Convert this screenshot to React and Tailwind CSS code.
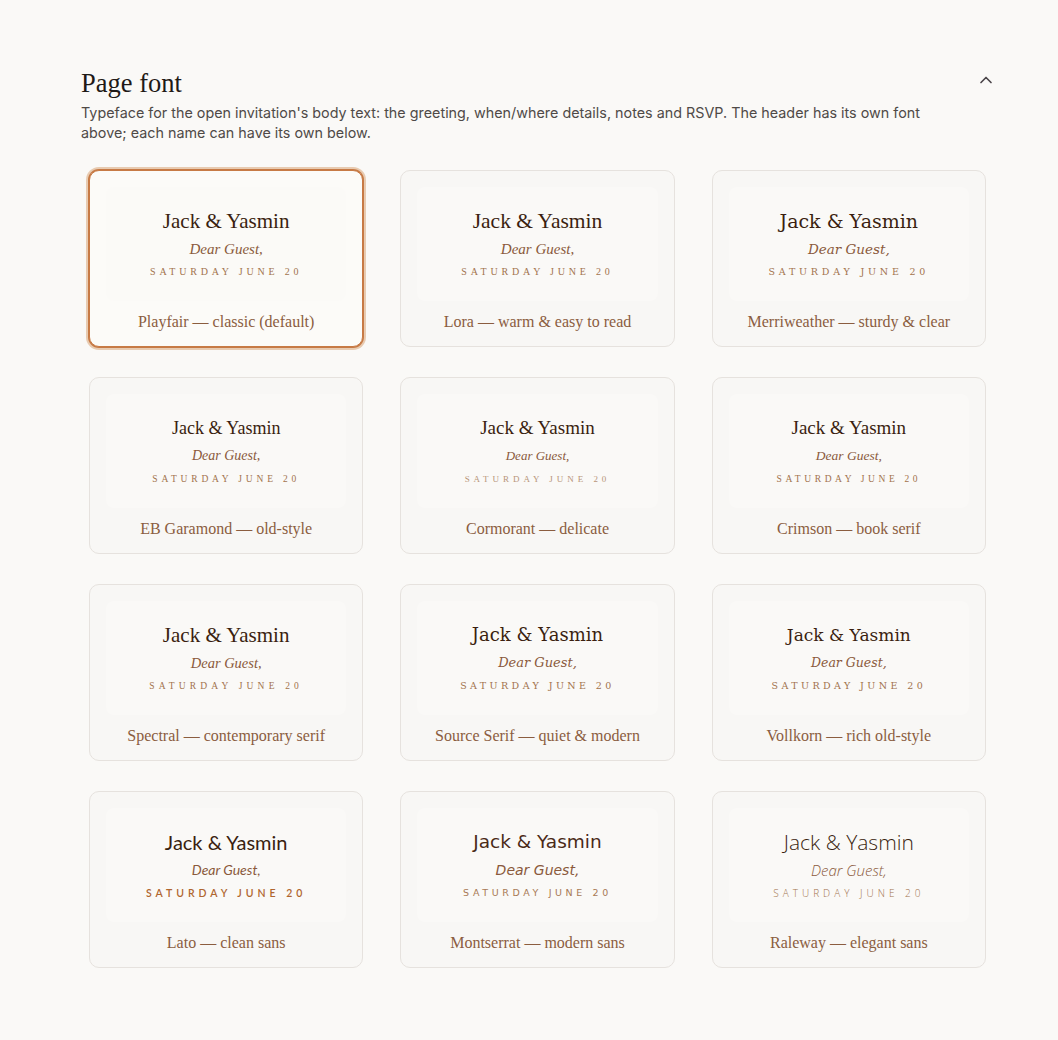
import React, { useState } from "react";
import { ChevronUp } from "lucide-react";

const SERIF = "font-['Liberation_Serif',serif]";
const DEJAVU = "font-['DejaVu_Serif',serif]";

const FONTS = [
  { id: "playfair", label: "Playfair — classic (default)", face: SERIF, name: "text-[21px]", guest: "text-[15px]", date: "text-[10px] tracking-[0.38em] text-[#a2734d]" },
  { id: "lora", label: "Lora — warm & easy to read", face: SERIF, name: "text-[21.5px]", guest: "text-[15px]", date: "text-[10px] tracking-[0.38em] text-[#a2734d]" },
  { id: "merriweather", label: "Merriweather — sturdy & clear", face: DEJAVU, name: "text-[19px]", guest: "text-[13.5px]", date: "text-[9.5px] tracking-[0.4em] text-[#a2734d]" },
  { id: "garamond", label: "EB Garamond — old-style", face: SERIF, name: "text-[18px]", guest: "text-[14px]", date: "text-[9.5px] tracking-[0.4em] text-[#a2734d]" },
  { id: "cormorant", label: "Cormorant — delicate", face: "font-['Liberation_Serif',serif] font-light", name: "text-[19px]", guest: "text-[13px]", date: "text-[9px] tracking-[0.44em] text-[#b89579]" },
  { id: "crimson", label: "Crimson — book serif", face: SERIF, name: "text-[19px]", guest: "text-[13.5px]", date: "text-[9.5px] tracking-[0.38em] text-[#a2734d]" },
  { id: "spectral", label: "Spectral — contemporary serif", face: SERIF, name: "text-[21px]", guest: "text-[14.5px]", date: "text-[9.5px] tracking-[0.44em] text-[#a2734d]" },
  { id: "source", label: "Source Serif — quiet & modern", face: DEJAVU, name: "text-[18px]", guest: "text-[13px]", date: "text-[9.5px] tracking-[0.36em] text-[#a2734d]" },
  { id: "vollkorn", label: "Vollkorn — rich old-style", face: DEJAVU, name: "text-[17px]", guest: "text-[12.5px]", date: "text-[9.5px] tracking-[0.36em] text-[#a2734d]" },
  { id: "lato", label: "Lato — clean sans", face: "font-['Lato',sans-serif]", name: "text-[20px]", guest: "text-[14px]", date: "text-[10.5px] font-semibold tracking-[0.38em] text-[#b0662f]" },
  { id: "montserrat", label: "Montserrat — modern sans", face: "font-['DejaVu_Sans',sans-serif]", name: "text-[18.5px] text-[#4a2a18]", guest: "text-[14px]", date: "text-[9.5px] tracking-[0.38em] text-[#a87a55]" },
  { id: "raleway", label: "Raleway — elegant sans", face: "font-['Open_Sans',sans-serif] font-light", name: "text-[21px]", guest: "text-[15px]", date: "text-[10px] tracking-[0.4em] text-[#a2734d]" },
];

function FontCard({ font, selected, onSelect }) {
  return (
    <button
      onClick={onSelect}
      className={
        "flex flex-col rounded-[10px] border px-4 pt-4 pb-[14px] text-left " +
        (selected
          ? "border-[#c77a45] bg-[#fcfbf8] shadow-[0_0_0_1px_#c77a45,0_0_0_3px_#e8cbb1]"
          : "border-[#e6e2de] bg-[#f8f7f5]")
      }
    >
      <div
        className={
          "flex h-[114px] flex-col items-center justify-center rounded-lg pb-[2px] " +
          (selected ? "bg-[#fbfaf7] " : "bg-[#faf9f7] ") +
          font.face
        }
      >
        <div className={"leading-7 text-[#3a1f10] " + font.name}>Jack &amp; Yasmin</div>
        <div className={"mt-[4px] italic leading-5 text-[#8a5a3c] " + font.guest}>Dear Guest,</div>
        <div className={"mt-[5px] uppercase leading-4 " + font.date}>Saturday June 20</div>
      </div>
      <div className={"mt-[11px] text-center text-[16px] leading-5 text-[#8b5d3f] " + SERIF}>{font.label}</div>
    </button>
  );
}

export default function App() {
  const [selected, setSelected] = useState("playfair");

  return (
    <div className="min-h-[1040px] bg-[#faf9f7] pt-[65px]">
      <section className="w-[914px] pl-[81px] box-content">
        <div className="flex items-start justify-between">
          <h2 className={"text-[26.5px] leading-9 text-[#1f1a17] " + SERIF}>Page font</h2>
          <ChevronUp className="mt-[5px] mr-[-1px] h-[20px] w-[20px] text-[#4a4448]" strokeWidth={2} />
        </div>
        <p className="mt-[2px] w-[870px] font-['Inter',sans-serif] text-[14.35px] leading-5 text-[#4f4a47]">
          Typeface for the open invitation's body text: the greeting, when/where details, notes and RSVP. The header has its own font above; each name can have its own below.
        </p>
        <div className="mt-[27px] ml-2 grid w-[897px] grid-cols-3 gap-x-[37px] gap-y-[30px]">
          {FONTS.map((f) => (
            <FontCard key={f.id} font={f} selected={selected === f.id} onSelect={() => setSelected(f.id)} />
          ))}
        </div>
      </section>
    </div>
  );
}
